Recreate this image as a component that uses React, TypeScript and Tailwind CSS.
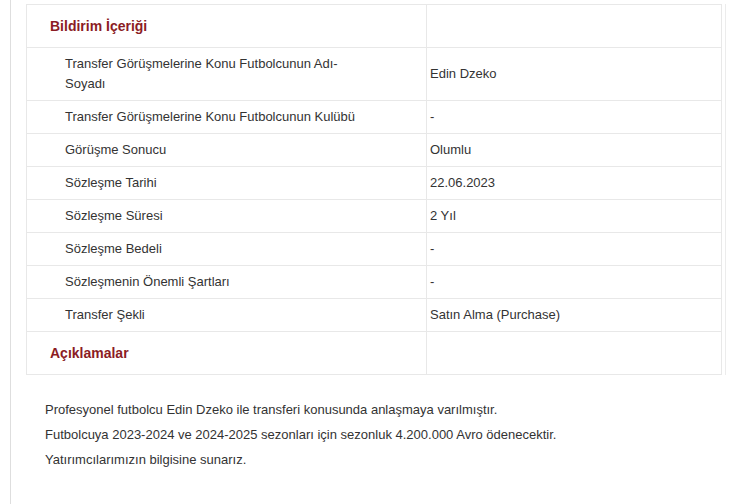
const rows: [string, string][] = [
  ["Transfer Görüşmelerine Konu Futbolcunun Adı-Soyadı", "Edin Dzeko"],
  ["Transfer Görüşmelerine Konu Futbolcunun Kulübü", "-"],
  ["Görüşme Sonucu", "Olumlu"],
  ["Sözleşme Tarihi", "22.06.2023"],
  ["Sözleşme Süresi", "2 Yıl"],
  ["Sözleşme Bedeli", "-"],
  ["Sözleşmenin Önemli Şartları", "-"],
  ["Transfer Şekli", "Satın Alma (Purchase)"],
];

export default function App() {
  return (
    <div className="h-[504px] overflow-hidden bg-white pl-[10px] font-['Liberation_Sans',Arial,sans-serif] text-[13px] text-[#333]">
      <div className="h-full border-l border-[#dedede] pl-[15px] pt-[4px]">
        <div className="w-[700px] border-r border-[#ececec] pr-[3px]">
          <table className="w-[696px] border-collapse border border-[#e8e8e8]">
            <tbody>
              <tr className="h-[43px] border-b border-[#e8e8e8]">
                <td className="w-[400px] border-r border-[#e8e8e8] pl-[23px] align-middle text-[14px] font-bold text-[#8b1c24]">
                  Bildirim İçeriği
                </td>
                <td></td>
              </tr>
              {rows.map(([label, value], i) => (
                <tr
                  key={label}
                  className={`${i === 0 ? "h-[53px]" : "h-[33px]"} border-b border-[#e8e8e8]`}
                >
                  <td className="border-r border-[#e8e8e8] pl-[38px] align-middle leading-[20px]">
                    <div className="max-w-[300px]">{label}</div>
                  </td>
                  <td className="pl-[3px] align-middle">{value}</td>
                </tr>
              ))}
              <tr className="h-[43px]">
                <td className="border-r border-[#e8e8e8] pl-[23px] align-middle text-[14px] font-bold text-[#8b1c24]">
                  Açıklamalar
                </td>
                <td></td>
              </tr>
            </tbody>
          </table>
        </div>
        <div className="pl-[19px] pt-[22px] leading-[25px]">
          <p>Profesyonel futbolcu Edin Dzeko ile transferi konusunda anlaşmaya varılmıştır.</p>
          <p>Futbolcuya 2023-2024 ve 2024-2025 sezonları için sezonluk 4.200.000 Avro ödenecektir.</p>
          <p>Yatırımcılarımızın bilgisine sunarız.</p>
        </div>
      </div>
    </div>
  );
}
